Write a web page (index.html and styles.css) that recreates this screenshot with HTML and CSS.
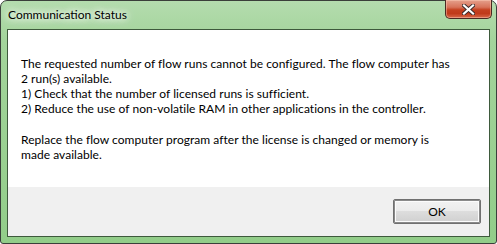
FILE: index.html
```html
<!DOCTYPE html>
<html>
<head>
<meta charset="utf-8">
<link rel="stylesheet" href="styles.css">
</head>
<body>
<div class="window">
  <div class="titlebar">
    <div class="title">Communication Status</div>
    <div class="close">
      <svg width="13" height="11" viewBox="0 0 13 11">
        <path d="M2 1.5 L11 9.5 M11 1.5 L2 9.5" stroke="#3a2a2a" stroke-width="4" stroke-linecap="square"/>
        <path d="M2 1.5 L11 9.5 M11 1.5 L2 9.5" stroke="#ffffff" stroke-width="2.2" stroke-linecap="square"/>
      </svg>
    </div>
  </div>
  <div class="client">
    <div class="message">
      <p>The requested number of flow runs cannot be configured. The flow computer has<br>2 run(s) available.<br>1) Check that the number of licensed runs is sufficient.<br>2) Reduce the use of non-volatile RAM in other applications in the controller.</p>
      <p>Replace the flow computer program after the license is changed or memory is<br>made available.</p>
    </div>
    <div class="buttons">
      <button class="ok">OK</button>
    </div>
  </div>
</div>
</body>
</html>
```
FILE: styles.css
```css
html, body {
  margin: 0;
  padding: 0;
  background: #ffffff;
}
.window {
  width: 497px;
  height: 244px;
  box-sizing: border-box;
  border: 1px solid #3a3f3a;
  border-radius: 7px 7px 3px 3px;
  background: linear-gradient(#b4dcae, #a3d49b 40px, #92cd89);
  display: flex;
  flex-direction: column;
  font-family: "Segoe UI", Lato, "Noto Sans", sans-serif;
  font-size: 12px;
  color: #000;
}
.titlebar {
  height: 28px;
  display: flex;
  justify-content: space-between;
  align-items: flex-start;
}
.title {
  margin: 6px 0 0 7px;
  line-height: 16px;
  text-shadow: 0 0 6px #ffffff, 0 0 10px #ffffff, 0 0 12px #eaf6e6;
}
.close {
  width: 47px;
  height: 19px;
  box-sizing: border-box;
  margin-right: 4px;
  margin-top: -1px;
  border: 1px solid #4a2a22;
  border-top: none;
  border-radius: 0 0 5px 5px;
  background: linear-gradient(#e5a08c, #d7735a 40%, #c4401f 55%, #c03a1a 75%, #d8684a);
  box-shadow: inset 0 0 0 1px rgba(255, 210, 190, 0.45);
  display: flex;
  align-items: center;
  justify-content: center;
}
.close svg {
  display: block;
  margin-top: 1px;
}
.client {
  flex: 1;
  margin: 0 6px 6px 6px;
  border: 1px solid #3e5a3c;
  display: flex;
  flex-direction: column;
}
.message {
  flex: 1;
  background: #ffffff;
  padding: 26px 10px 0 13px;
}
.message p {
  margin: 0 0 16px 0;
  line-height: 15px;
  letter-spacing: 0.04px;
}
.buttons {
  height: 49px;
  background: #f0f0f0;
  display: flex;
  justify-content: flex-end;
  align-items: center;
  padding-right: 8px;
}
.ok {
  width: 88px;
  height: 25px;
  box-sizing: border-box;
  border: 1px solid #707070;
  border-radius: 2px;
  background: linear-gradient(#f2f2f2, #ebebeb 50%, #dddddd 50%, #cfcfcf);
  box-shadow: inset 0 0 0 1px #8a8a8a, inset 0 0 0 2px #fcfcfc;
  font-family: "Segoe UI", Lato, "Noto Sans", sans-serif;
  font-size: 12px;
  color: #000;
  padding: 0;
}
```
